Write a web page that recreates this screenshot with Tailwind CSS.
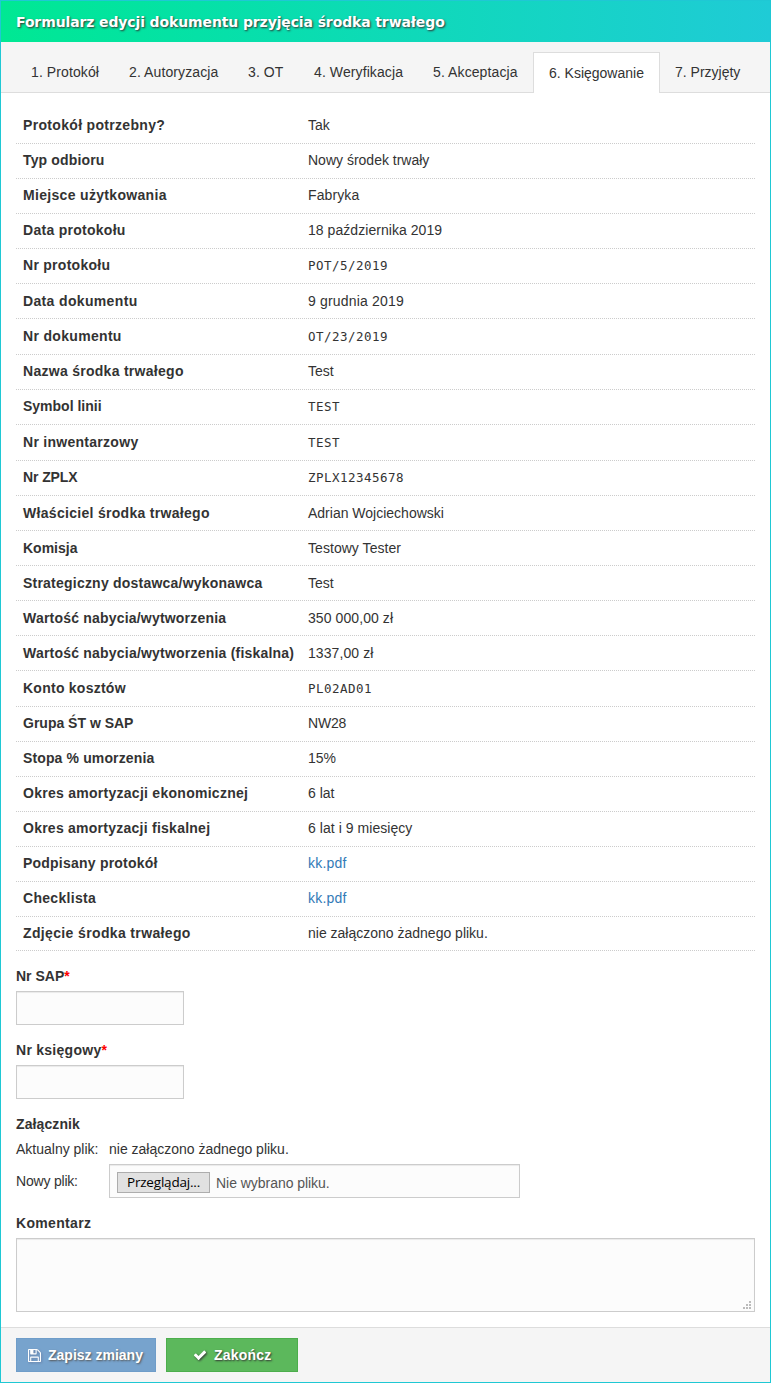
<!DOCTYPE html>
<html lang="pl"><head><meta charset="utf-8"><title>Formularz edycji dokumentu</title>
<script src="https://cdn.jsdelivr.net/npm/@tailwindcss/browser@4"></script></head>
<body class="bg-white">
<main class="flex h-[1383px] w-[771px] flex-col border border-[#1fc8d4] text-sm leading-5 text-[#333] font-['Liberation_Sans',Arial,sans-serif]">
<header class="flex h-[41px] shrink-0 items-center bg-linear-to-r from-[#00e893] to-[#1fcbd6] pl-[15px]">
<h1 class="text-[14px] tracking-[-0.12px] font-bold whitespace-nowrap text-white [text-shadow:1px_1px_2px_#333] font-['DejaVu_Sans',Verdana,sans-serif]">Formularz edycji dokumentu przyjęcia środka trwałego</h1>
</header>
<nav class="flex h-[51px] shrink-0 items-end border-b border-[#ddd] bg-[#f5f5f5] pl-[15px] whitespace-nowrap [&>a]:h-10 [&>a]:pt-[10px] [&>a]:pl-[15px]">
<a class="w-[98px] tracking-[0.1px]">1. Protokół</a>
<a class="w-[119px] tracking-[0.1px]">2. Autoryzacja</a>
<a class="w-[66px] tracking-[0.1px]">3. OT</a>
<a class="w-[119px] tracking-[0.1px]">4. Weryfikacja</a>
<a class="w-[115px] tracking-[0.1px]">5. Akceptacja</a>
<a class="-mb-px h-[41px]! w-[127px] border border-b-0 border-[#ddd] bg-white">6. Księgowanie</a>
<a>7. Przyjęty</a>
</nav>
<section class="h-[1234px] shrink-0 px-[15px] pt-4">
<dl class="[&>div]:flex [&>div]:border-b [&>div]:border-dotted [&>div]:border-[#ccc] [&>div]:pl-[7px] [&_dt]:w-[285px] [&_dt]:shrink-0 [&_dt]:font-bold [&_dt]:whitespace-nowrap [&_code]:text-[12.5px] [&_code]:tracking-[0.475px] [&_code]:font-['DejaVu_Sans_Mono',monospace]">
<div class="h-[35px] pt-1.5"><dt class="tracking-[0.32px]">Protokół potrzebny?</dt><dd>Tak</dd></div>
<div class="h-[35px] pt-1.5"><dt class="tracking-[0.15px]">Typ odbioru</dt><dd>Nowy środek trwały</dd></div>
<div class="h-[35px] pt-1.5"><dt class="tracking-[0.32px]">Miejsce użytkowania</dt><dd class="tracking-[0.1px]">Fabryka</dd></div>
<div class="h-[35px] pt-1.5"><dt class="tracking-[0.28px]">Data protokołu</dt><dd class="tracking-[0.05px]">18 października 2019</dd></div>
<div class="h-[35px] pt-1.5"><dt class="tracking-[0.28px]">Nr protokołu</dt><dd><code>POT/5/2019</code></dd></div>
<div class="h-[35px] pt-[7px]"><dt class="tracking-[0.35px]">Data dokumentu</dt><dd class="tracking-[0.18px]">9 grudnia 2019</dd></div>
<div class="h-9 pt-[7px]"><dt class="tracking-[0.32px]">Nr dokumentu</dt><dd><code>OT/23/2019</code></dd></div>
<div class="h-[35px] pt-1.5"><dt class="tracking-[0.28px]">Nazwa środka trwałego</dt><dd>Test</dd></div>
<div class="h-[35px] pt-1.5"><dt>Symbol linii</dt><dd><code>TEST</code></dd></div>
<div class="h-9 pt-[7px]"><dt class="tracking-[0.28px]">Nr inwentarzowy</dt><dd><code>TEST</code></dd></div>
<div class="h-[35px] pt-1.5"><dt class="tracking-[-0.1px]">Nr ZPLX</dt><dd><code>ZPLX12345678</code></dd></div>
<div class="h-[35px] pt-[7px]"><dt class="tracking-[0.3px]">Właściciel środka trwałego</dt><dd>Adrian Wojciechowski</dd></div>
<div class="h-[35px] pt-[7px]"><dt>Komisja</dt><dd class="tracking-[0.05px]">Testowy Tester</dd></div>
<div class="h-[35px] pt-[7px]"><dt class="tracking-[0.22px]">Strategiczny dostawca/wykonawca</dt><dd>Test</dd></div>
<div class="h-[35px] pt-[7px]"><dt class="tracking-[0.2px]">Wartość nabycia/wytworzenia</dt><dd class="tracking-[0.08px]">350 000,00 zł</dd></div>
<div class="h-[35px] pt-[7px]"><dt class="tracking-[0.21px]">Wartość nabycia/wytworzenia (fiskalna)</dt><dd class="tracking-[0.08px]">1337,00 zł</dd></div>
<div class="h-9 pt-[7px]"><dt class="tracking-[0.25px]">Konto kosztów</dt><dd><code>PL02AD01</code></dd></div>
<div class="h-[35px] pt-1.5"><dt>Grupa ŚT w SAP</dt><dd class="tracking-[-0.2px]">NW28</dd></div>
<div class="h-[35px] pt-1.5"><dt class="tracking-[0.13px]">Stopa % umorzenia</dt><dd>15%</dd></div>
<div class="h-[35px] pt-1.5"><dt class="tracking-[0.27px]">Okres amortyzacji ekonomicznej</dt><dd>6 lat</dd></div>
<div class="h-[35px] pt-1.5"><dt class="tracking-[0.25px]">Okres amortyzacji fiskalnej</dt><dd class="tracking-[0.05px]">6 lat i 9 miesięcy</dd></div>
<div class="h-[35px] pt-1.5"><dt class="tracking-[0.22px]">Podpisany protokół</dt><dd><a class="tracking-[0.2px] text-[#337ab7]">kk.pdf</a></dd></div>
<div class="h-[35px] pt-1.5"><dt class="tracking-[0.3px]">Checklista</dt><dd><a class="tracking-[0.2px] text-[#337ab7]">kk.pdf</a></dd></div>
<div class="h-[34px] pt-1.5"><dt class="tracking-[0.36px]">Zdjęcie środka trwałego</dt><dd>nie załączono żadnego pliku.</dd></div>
</dl>
<div class="pt-[15px]">
<label class="block h-[25px] font-bold">Nr SAP<span class="text-[red]">*</span></label>
<input class="block h-[34px] w-[168px] border border-[#ccc] bg-[#fcfcfc] px-3 shadow-[inset_0_1px_1px_rgba(0,0,0,.075)]">
</div>
<div class="pt-[15px]">
<label class="block h-[25px] font-bold tracking-[0.27px]">Nr księgowy<span class="text-[red]">*</span></label>
<input class="block h-[34px] w-[168px] border border-[#ccc] bg-[#fcfcfc] px-3 shadow-[inset_0_1px_1px_rgba(0,0,0,.075)]">
</div>
<div class="pt-[15px]">
<p class="h-[25px] font-bold tracking-[0.1px]">Załącznik</p>
<div class="flex h-[25px]"><span class="w-[93px]">Aktualny plik:</span><span>nie załączono żadnego pliku.</span></div>
<div class="flex"><span class="w-[93px] pt-[7px] tracking-[-0.2px]">Nowy plik:</span>
<div class="flex h-[34px] w-[411px] border border-[#ccc] bg-[#fcfcfc] pt-[7px] pl-[7px] shadow-[inset_0_1px_1px_rgba(0,0,0,.075)]">
<button class="h-[21px] w-[93px] border border-[#adadad] bg-[#e1e1e1] text-[13.5px] leading-[19px] tracking-[-0.2px] whitespace-nowrap text-black font-['Open_Sans',sans-serif]">Przeglądaj...</button>
<span class="pt-px pl-1.5 tracking-[-0.04px] text-[#555]">Nie wybrano pliku.</span>
</div></div>
</div>
<div class="pt-[15px]">
<label class="block h-[25px] font-bold tracking-[0.32px]">Komentarz</label>
<div class="flex h-[74px] w-[739px] items-end justify-end border border-[#ccc] bg-[#fcfcfc] pr-[3px] pb-0.5 shadow-[inset_0_1px_1px_rgba(0,0,0,.075)]">
<svg class="h-2 w-2" viewBox="0 0 8 8" fill="#bbb" shape-rendering="crispEdges"><path d="M6 0h2v2H6zM3 3h2v2H3zM6 3h2v2H6zM0 6h2v2H0zM3 6h2v2H3zM6 6h2v2H6z"/></svg>
</div>
</div>
</section>
<footer class="flex grow gap-2.5 border-t border-[#ddd] bg-[#f5f5f5] pt-2.5 pl-[15px] font-bold text-white">
<button class="flex h-[34px] w-[140px] items-center border border-[#6f9dc9] bg-[#77a3cd] pl-[11px] [text-shadow:1px_1px_2px_#555]">
<svg class="mr-[7px] h-[13px] w-[13px] [filter:drop-shadow(1px_1px_1px_#5577)]" viewBox="0 0 1536 1536" fill="white"><path d="M384 1408h768v-384H384zM1280 1408h128V512q0-14-10-38.500t-20-34.500L1097 158q-10-10-34-20t-39-10v416q0 40-28 68t-68 28H352q-40 0-68-28t-28-68V128H128v1280h128V992q0-40 28-68t68-28h832q40 0 68 28t28 68zM896 480V160q0-13-9.500-22.500T864 128H672q-13 0-22.500 9.500T640 160v320q0 13 9.500 22.500T672 512h192q13 0 22.500-9.500T896 480zM1536 512v928q0 40-28 68t-68 28H96q-40 0-68-28t-28-68V96q0-40 28-68T96 0h928q40 0 88 20t76 48l280 280q28 28 48 76t20 88z"/></svg>Zapisz zmiany</button>
<button class="flex h-[34px] w-[132px] items-center border border-[#4cae4c] bg-[#5cb85c] pl-[26px] [text-shadow:1px_1px_2px_#333]">
<svg class="mr-[7px] h-3.5 w-3.5 [filter:drop-shadow(1px_1px_1px_#333)]" viewBox="0 0 1792 1792" fill="white"><path d="M1671 566q0 40-28 68l-724 724-136 136q-28 28-68 28t-68-28l-136-136-362-362q-28-28-28-68t28-68l136-136q28-28 68-28t68 28l294 295 656-657q28-28 68-28t68 28l136 136q28 28 28 68z"/></svg><span class="tracking-[0.2px]">Zakończ</span></button>
</footer>
</main>
</body></html>
